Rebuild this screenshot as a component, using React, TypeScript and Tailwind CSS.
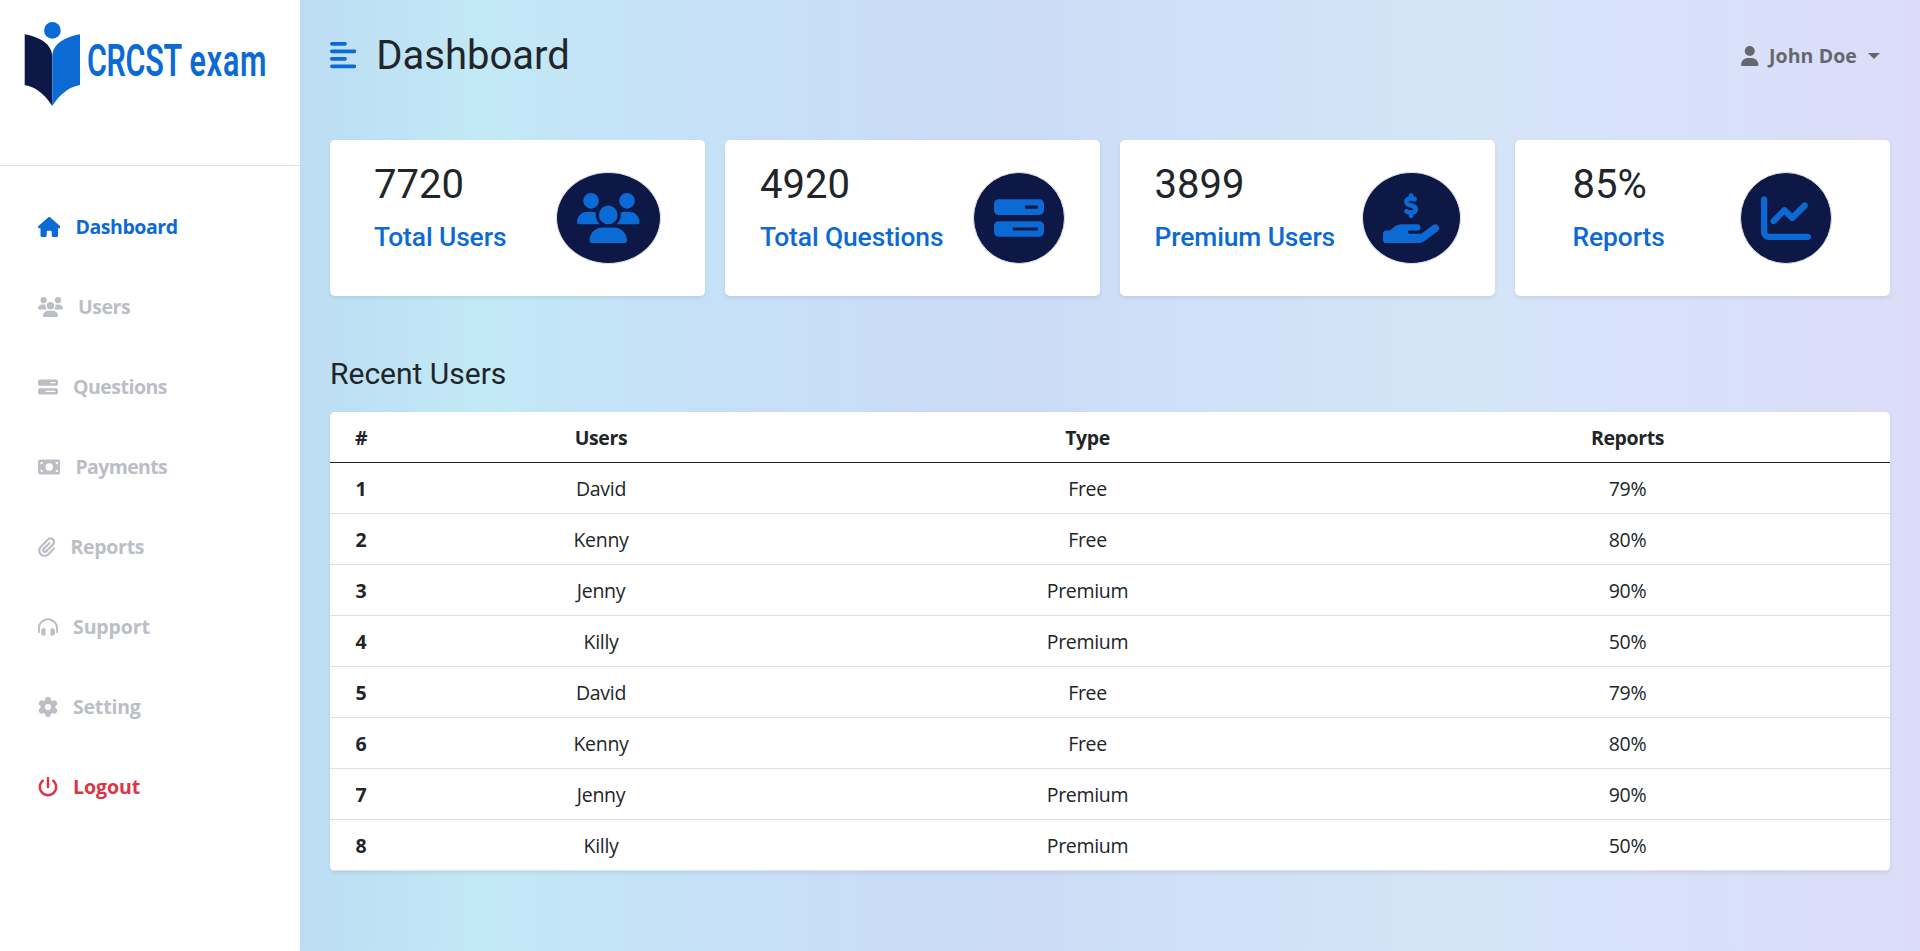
import type { IconType } from "react-icons";
import {
  FaAlignLeft,
  FaBarsProgress,
  FaChartLine,
  FaGear,
  FaHandHoldingDollar,
  FaHeadphonesSimple,
  FaHouse,
  FaMoneyBill,
  FaPaperclip,
  FaPowerOff,
  FaUser,
  FaUsers,
} from "react-icons/fa6";

type NavItem = { label: string; icon: IconType; iconClass: string; color: string };

const navItems: NavItem[] = [
  { label: "Dashboard", icon: FaHouse, iconClass: "w-[22.5px]", color: "text-[#0b6ad4] tracking-[-0.45px]" },
  { label: "Users", icon: FaUsers, iconClass: "w-[25px]", color: "text-[#bbbec5] tracking-[-0.45px]" },
  { label: "Questions", icon: FaBarsProgress, iconClass: "w-5", color: "text-[#bbbec5] tracking-[-0.5px]" },
  { label: "Payments", icon: FaMoneyBill, iconClass: "w-[22.5px]", color: "text-[#bbbec5] tracking-[-0.65px]" },
  { label: "Reports", icon: FaPaperclip, iconClass: "w-[17.5px]", color: "text-[#bbbec5] tracking-[-0.3px]" },
  { label: "Support", icon: FaHeadphonesSimple, iconClass: "w-5", color: "text-[#bbbec5] tracking-[-0.1px]" },
  { label: "Setting", icon: FaGear, iconClass: "w-5", color: "text-[#bbbec5] tracking-[-0.2px]" },
  { label: "Logout", icon: FaPowerOff, iconClass: "w-5", color: "text-[#dc3545] tracking-[-0.05px]" },
];

type Stat = { value: string; label: string; icon: IconType; iconClass: string; padding: string };

const stats: Stat[] = [
  { value: "7720", label: "Total Users", icon: FaUsers, iconClass: "w-[62.5px]", padding: "pl-11 pr-[44.5px]" },
  { value: "4920", label: "Total Questions", icon: FaBarsProgress, iconClass: "w-[50px]", padding: "pl-[35px] pr-[35.5px]" },
  { value: "3899", label: "Premium Users", icon: FaHandHoldingDollar, iconClass: "w-[56.25px]", padding: "pl-[34.5px] pr-[34.5px]" },
  { value: "85%", label: "Reports", icon: FaChartLine, iconClass: "w-[50px]", padding: "pl-[57.5px] pr-[58.5px]" },
];

const rows = [
  ["David", "Free", "79%"],
  ["Kenny", "Free", "80%"],
  ["Jenny", "Premium", "90%"],
  ["Killy", "Premium", "50%"],
  ["David", "Free", "79%"],
  ["Kenny", "Free", "80%"],
  ["Jenny", "Premium", "90%"],
  ["Killy", "Premium", "50%"],
];

function Logo() {
  return (
    <svg viewBox="0 0 300 165" className="h-[165px] w-[300px]">
      <path d="M24.7 34.2C40 37 52.3 44 52.3 57V106C44 93 35 87 24.7 85Z" fill="#0d1846" />
      <path d="M80 34.2C64.6 37 52.3 44 52.3 57V106C60.6 93 69.6 87 80 85Z" fill="#0b6ad4" />
      <circle cx="52.4" cy="30.4" r="8.3" fill="#0b6ad4" />
      <g
        transform="translate(87 75.6) scale(0.7 1)"
        fill="#0b6ad4"
        fontFamily="Roboto, sans-serif"
        fontSize="43.5"
        fontWeight="600"
      >
        <text x="0" y="0" textLength="136">CRCST</text>
        <text x="146.5" y="0" textLength="110">exam</text>
      </g>
    </svg>
  );
}

function Sidebar() {
  return (
    <aside className="w-[300px] shrink-0 bg-white">
      <div className="h-[166px] border-b border-[#dee2e6]">
        <Logo />
      </div>
      <nav className="flex flex-col pt-[21px]">
        {navItems.map(({ label, icon: Icon, iconClass, color }) => (
          <a key={label} className={`flex h-20 items-center gap-[15.5px] pl-[37.5px] text-[19.5px] font-bold ${color}`}>
            <Icon className={`h-5 shrink-0 ${iconClass}`} />
            <span>{label}</span>
          </a>
        ))}
      </nav>
    </aside>
  );
}

function StatCard({ value, label, icon: Icon, iconClass, padding }: Stat) {
  return (
    <div className={`flex h-[156px] items-center justify-between rounded-[5px] bg-white shadow-[0_2px_4px_rgba(0,0,0,0.075)] ${padding}`}>
      <div className="flex h-[116px] flex-col pt-px font-['Roboto',sans-serif]">
        <span className="h-12 text-[40px] leading-[48px]">{value}</span>
        <span className="mt-3 text-[26.4px] leading-8 font-medium tracking-[-0.1px] whitespace-nowrap text-[#0b6ad4]">{label}</span>
      </div>
      <div className="rounded-[50%] border border-[#dee2e6] bg-[#0d1846] p-5">
        <Icon className={`h-[50px] text-[#0b6ad4] ${iconClass}`} />
      </div>
    </div>
  );
}

export default function App() {
  return (
    <div className="flex h-[951px] w-full overflow-hidden bg-[linear-gradient(to_right,#bdddf4_300px,#bfe3f4_400px,#c2e9f6_480px,#c5e2f7_660px,#cbdcf7_940px,#ccdcf6_1030px,#cfe0f8_1180px,#d3e4f7_1400px,#d4e5f6_1480px,#d6e3fb_1560px,#d9e0f9_1740px,#dcdcf9_1920px)] font-['Open_Sans',sans-serif] text-[#212529]">
      <Sidebar />
      <main className="flex min-w-0 flex-1 flex-col px-[30px]">
        <header className="flex h-[110px] items-center justify-between pr-[10px]">
          <div className="flex items-center gap-5">
            <FaAlignLeft className="h-[30px] w-[26.25px] text-[#0b6ad4]" />
            <h1 className="pt-0.5 font-['Roboto',sans-serif] text-[40px] leading-[48px] font-normal">Dashboard</h1>
          </div>
          <div className="flex items-center pt-0.5 text-[19.5px] font-bold text-[#65676f]">
            <FaUser className="mr-[10px] mb-px h-5 w-[17.5px]" />
            <span className="tracking-[0.1px]">John Doe</span>
            <span className="ml-[11px] border-x-6 border-t-6 border-x-transparent border-t-[#65676f]" />
          </div>
        </header>
        <section className="mt-[30px] grid grid-cols-4 gap-5">
          {stats.map((s) => (
            <StatCard key={s.label} {...s} />
          ))}
        </section>
        <h3 className="mt-[60px] font-['Roboto',sans-serif] text-[30px] leading-9 font-normal">Recent Users</h3>
        <div className="mt-5 overflow-hidden rounded-[5px] bg-white shadow-[0_2px_4px_rgba(0,0,0,0.075)]">
          <div className="grid h-[51px] grid-cols-[62px_418px_555px_525px] items-center border-b border-[#212529] pt-0.5 text-center text-[19.5px] font-bold tracking-[-0.4px]">
            <span>#</span>
            <span>Users</span>
            <span>Type</span>
            <span>Reports</span>
          </div>
          {rows.map(([user, type, report], i) => (
            <div key={i} className="grid h-[51px] grid-cols-[62px_418px_555px_525px] items-center border-b border-[#dee2e6] pt-0.5 text-center text-[19.5px] tracking-[-0.3px]">
              <span className="font-bold">{i + 1}</span>
              <span>{user}</span>
              <span>{type}</span>
              <span>{report}</span>
            </div>
          ))}
        </div>
      </main>
    </div>
  );
}
